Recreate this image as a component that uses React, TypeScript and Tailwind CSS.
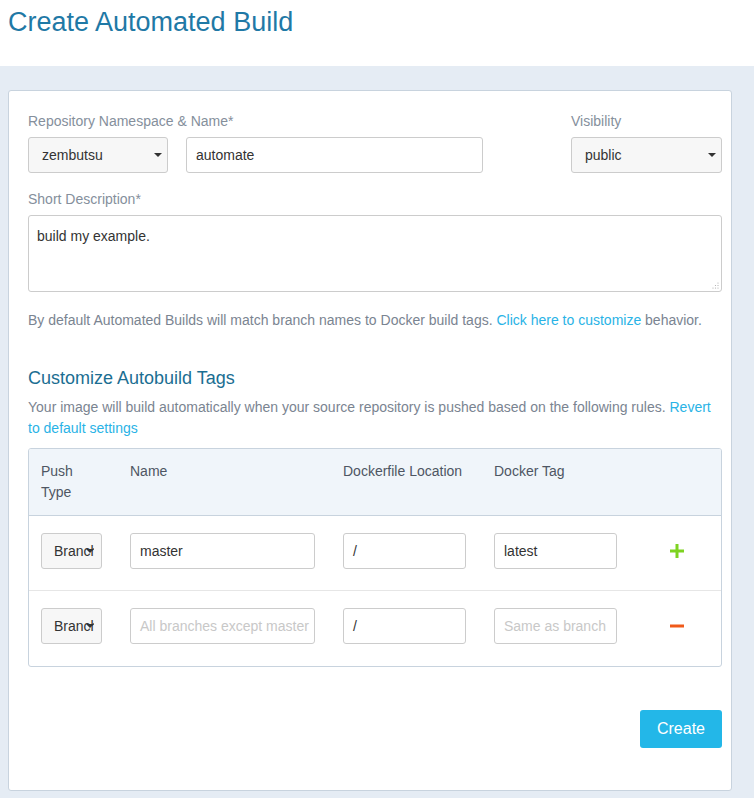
const font = { fontFamily: '"Liberation Sans", Arial, sans-serif' }

function Caret() {
  return (
    <span className="absolute top-1/2 -translate-y-1/2 border-x-[4px] border-t-[4px] border-x-transparent border-t-[#333] w-0 h-0" />
  )
}

function SelectBox({ value, className }: { value: string; className: string }) {
  return (
    <div
      className={`relative h-9 rounded-[3px] border border-[#cccccc] bg-[#f7f7f7] text-[14px] text-[#333] flex items-center ${className}`}
    >
      <span>{value}</span>
      <span className="absolute right-[13px] top-0 h-full flex items-center">
        <Caret />
      </span>
    </div>
  )
}

function TextBox({ value, placeholder, className }: { value?: string; placeholder?: string; className: string }) {
  return (
    <div
      className={`h-9 rounded-[3px] border border-[#cccccc] bg-white text-[14px] flex items-center px-[9px] overflow-hidden whitespace-nowrap ${className}`}
    >
      {value ? <span className="text-[#333]">{value}</span> : <span className="text-[#c8c8c8]">{placeholder}</span>}
    </div>
  )
}

function BranchSelect() {
  return (
    <div className="relative w-[61px] h-9 rounded-[3px] border border-[#cccccc] bg-[#f7f7f7] text-[14px] text-[#333] flex items-center pl-[12px] overflow-hidden whitespace-nowrap">
      <span className="block w-[40px] overflow-hidden">Branch</span>
      <span className="absolute left-[44px] top-0 h-full flex items-center">
        <Caret />
      </span>
    </div>
  )
}

function Row({
  name,
  namePh,
  tag,
  tagPh,
  action,
  last,
}: {
  name?: string
  namePh?: string
  tag?: string
  tagPh?: string
  action: 'add' | 'remove'
  last?: boolean
}) {
  return (
    <div
      className={`grid grid-cols-[89px_213px_151px_151px_1fr] items-start pt-[17px] h-[75px] ${last ? '' : 'border-b border-[#e6e6e6]'}`}
    >
      <div className="pl-[12px]">
        <BranchSelect />
      </div>
      <div className="pl-[12px]">
        <TextBox value={name} placeholder={namePh} className="w-[185px]" />
      </div>
      <div className="pl-[12px]">
        <TextBox value="/" className="w-[123px]" />
      </div>
      <div className="pl-[12px]">
        <TextBox value={tag} placeholder={tagPh} className="w-[123px]" />
      </div>
      <div className="flex justify-center items-center h-9">
        {action === 'add' ? (
          <svg width="14" height="14" viewBox="0 0 14 14">
            <rect x="5.5" y="0" width="3" height="14" fill="#7ed321" />
            <rect x="0" y="5.5" width="14" height="3" fill="#7ed321" />
          </svg>
        ) : (
          <svg width="14" height="14" viewBox="0 0 14 14">
            <rect x="0" y="5.5" width="14" height="3" fill="#f05a1a" />
          </svg>
        )}
      </div>
    </div>
  )
}

export default function App() {
  return (
    <div className="min-h-[798px] bg-[#e5ecf4] flex flex-col" style={font}>
      <div className="bg-white h-[66px] px-[8px] pt-[4px]">
        <h1 className="text-[27px] leading-[36px] text-[#1f79a6]">Create Automated Build</h1>
      </div>

      <div className="pt-[24px] pl-[8px] pr-[22px] pb-[9px]">
        <div className="bg-white border border-[#c8d3de] rounded-[3px] pl-[19px] pr-[9px] pt-[20px] pb-[42px]">
          <div className="flex">
            <div>
              <div className="text-[14px] leading-[20px] text-[#858f9c] mb-[6px]">
                Repository Namespace &amp; Name<span className="text-[#858f9c]">*</span>
              </div>
              <div className="flex gap-[18px]">
                <SelectBox value="zembutsu" className="w-[140px] pl-[13px]" />
                <TextBox value="automate" className="w-[297px]" />
              </div>
            </div>
            <div className="ml-auto">
              <div className="text-[14px] leading-[20px] text-[#858f9c] mb-[6px]">Visibility</div>
              <SelectBox value="public" className="w-[151px] pl-[13px]" />
            </div>
          </div>

          <div className="text-[14px] leading-[20px] text-[#858f9c] mt-[16px] mb-[6px]">Short Description*</div>
          <div className="relative h-[77px] rounded-[3px] border border-[#cccccc] px-[8px] pt-[10px] text-[14px] text-[#333]">
            build my example.
            <svg className="absolute right-[2px] bottom-[2px]" width="8" height="8" viewBox="0 0 8 8">
              <circle cx="7" cy="2" r="0.6" fill="#aaa" />
              <circle cx="7" cy="4.5" r="0.6" fill="#aaa" />
              <circle cx="4.5" cy="4.5" r="0.6" fill="#aaa" />
              <circle cx="7" cy="7" r="0.6" fill="#aaa" />
              <circle cx="4.5" cy="7" r="0.6" fill="#aaa" />
              <circle cx="2" cy="7" r="0.6" fill="#aaa" />
            </svg>
          </div>

          <p className="text-[14px] leading-[20px] text-[#7a8491] mt-[18px]">
            By default Automated Builds will match branch names to Docker build tags.{' '}
            <span className="text-[#29b3e6]">Click here to customize</span> behavior.
          </p>

          <h2 className="text-[18px] leading-[24px] text-[#1b6e92] mt-[36px]">Customize Autobuild Tags</h2>
          <p className="text-[14px] leading-[21px] text-[#7a8491] mt-[7px]">
            Your image will build automatically when your source repository is pushed based on the following rules.{' '}
            <span className="text-[#29b3e6]">Revert to default settings</span>
          </p>

          <div className="mt-[9px] border border-[#c8d3de] rounded-[3px] overflow-hidden">
            <div className="grid grid-cols-[89px_213px_151px_151px_1fr] bg-[#f0f5fa] border-b border-[#c8d3de] h-[67px] pt-[12px] text-[14px] leading-[21px] text-[#4e5663]">
              <div className="pl-[12px] w-[60px]">Push Type</div>
              <div className="pl-[12px]">Name</div>
              <div className="pl-[12px]">Dockerfile Location</div>
              <div className="pl-[12px]">Docker Tag</div>
              <div />
            </div>
            <Row name="master" tag="latest" action="add" />
            <Row namePh="All branches except master" tagPh="Same as branch" action="remove" last />
          </div>

          <div className="flex justify-end mt-[43px]">
            <button className="h-[38px] w-[82px] rounded-[3px] bg-[#23b7e8] text-white text-[16px]">Create</button>
          </div>
        </div>
      </div>
    </div>
  )
}
